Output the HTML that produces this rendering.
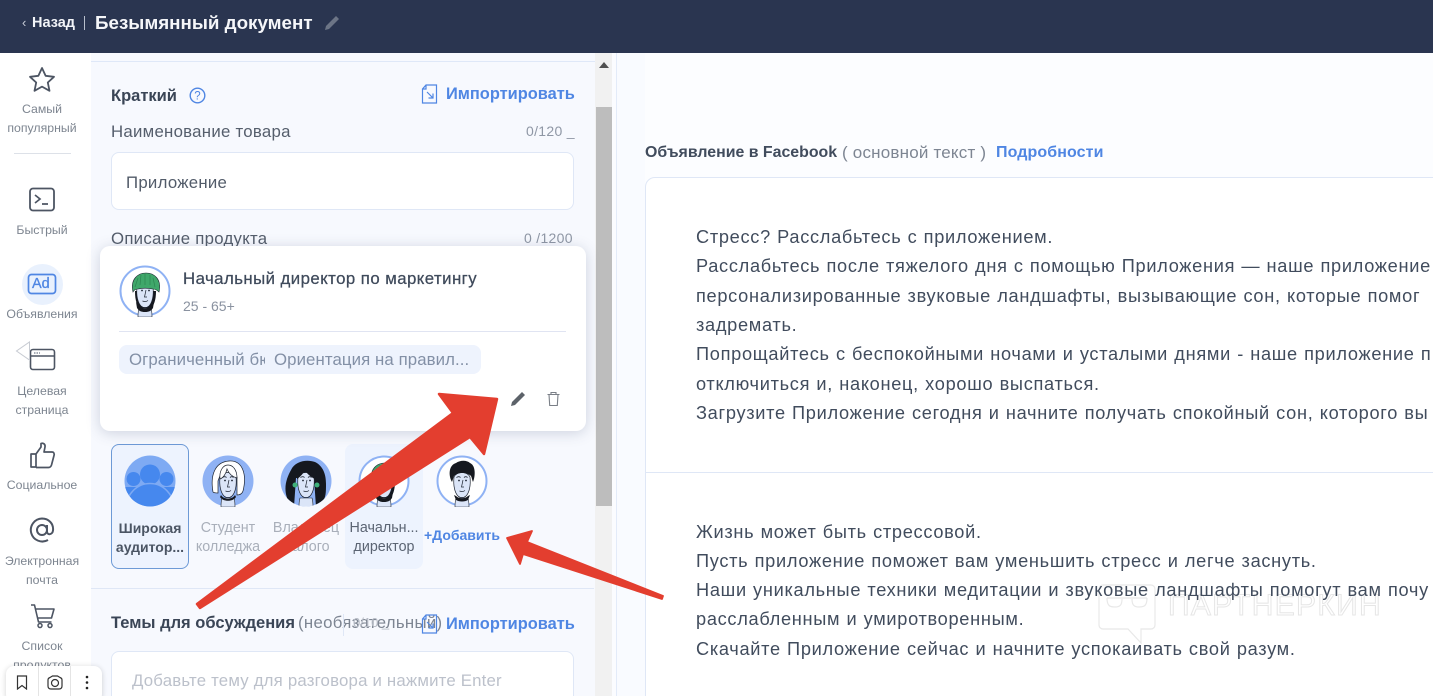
<!DOCTYPE html>
<html lang="ru"><head><meta charset="utf-8"><title>Безымянный документ</title>
<style>
*{box-sizing:border-box}
html,body{margin:0;padding:0;width:1433px;height:696px;overflow:hidden}
body{font-family:"Liberation Sans",sans-serif;color:#3d4859}
#w{position:absolute;left:0;top:0;width:1433px;height:696px;overflow:hidden;background:#fcfdff}
.a{position:absolute}
.t{position:absolute;white-space:nowrap}
.side{position:absolute;left:0;width:84px;text-align:center;font-size:12.3px;line-height:19px;color:#7d8590}
.b{font-weight:bold}
.blue{color:#4f86e3}
.lbl{font-size:16.8px;color:#555e6c;letter-spacing:.27px}
.cnt{font-size:14px;color:#8f97a5;letter-spacing:.3px}
.r{font-size:18.2px;color:#414c5d;left:696px;letter-spacing:.7px;word-spacing:.5px}
.imp{font-size:16.4px}
.nm{position:absolute;width:78px;text-align:center;font-size:14.3px;line-height:19px;color:#a9afba}
</style></head><body><div id="w">

<div class="a" style="left:0;top:0;width:1433px;height:53px;background:#2a3550"></div>
<div class="t" style="left:22px;top:15px;font-size:13px;color:#c9ced8">‹</div>
<div class="t b" style="left:32px;top:15px;font-size:14.5px;color:#f2f4f8">Назад</div>
<div class="a" style="left:84px;top:16px;width:1px;height:14px;background:#b8bfcc"></div>
<div class="t b" style="left:95px;top:12px;font-size:18.8px;color:#f5f6f9">Безымянный документ</div>
<svg class="a" style="left:324px;top:14px" width="17" height="17" viewBox="0 0 17 17"><path d="M1 16l1-4L12 2l3 3L5 15z" fill="#6c7586"/></svg>

<!-- sidebar -->
<div class="a" style="left:0;top:53px;width:91px;height:643px;background:#fff"></div>
<svg class="a" style="left:28px;top:66px" width="28" height="27" viewBox="0 0 28 27"><path d="M14 2l3.6 7.8 8.400 1-6.200 5.700 1.700 8.300L14 20.600 6.500 24.800l1.700-8.300L2 10.800l8.400-1z" fill="none" stroke="#4d5563" stroke-width="1.800" stroke-linejoin="round"/></svg>
<div class="side" style="top:100px">Самый<br>популярный</div>
<div class="a" style="left:14px;top:153px;width:57px;height:1px;background:#dde1e8"></div>
<svg class="a" style="left:28px;top:187px" width="28" height="26" viewBox="0 0 28 26"><rect x="2" y="1.500" width="24" height="22" rx="3" fill="none" stroke="#4d5563" stroke-width="1.800"/><path d="M7 8l5 4-5 4M14 17h6" fill="none" stroke="#4d5563" stroke-width="1.700"/></svg>
<div class="side" style="top:221px">Быстрый</div>
<div class="a" style="left:22px;top:264px;width:41px;height:41px;border-radius:50%;background:#e9f1fd"></div>
<svg class="a" style="left:27px;top:273px" width="31" height="23" viewBox="0 0 31 23"><rect x="1.500" y="1.500" width="27" height="19" rx="3" fill="none" stroke="#4f86e3" stroke-width="1.700"/></svg>
<div class="t" style="left:32px;top:276px;font-size:14.500px;color:#4f86e3;-webkit-text-stroke:.3px #4f86e3">Ad</div>
<div class="side" style="top:305px">Объявления</div>
<svg class="a" style="left:29px;top:348px" width="27" height="23" viewBox="0 0 27 23"><rect x="1.500" y="1.500" width="24" height="20" rx="2.500" fill="none" stroke="#4d5563" stroke-width="1.600"/><path d="M2 8h23" stroke="#4d5563" stroke-width="1.500"/><path d="M5 5h6" stroke="#8a919d" stroke-width="1.500" stroke-dasharray="1.500 1"/></svg>
<svg class="a" style="left:15px;top:341px" width="16" height="20" viewBox="0 0 16 20"><path d="M14.500 1v18L1.500 10z" fill="#fff" stroke="#c7cbd2" stroke-width="1"/></svg>
<div class="side" style="top:382px">Целевая<br>страница</div>
<svg class="a" style="left:29px;top:441px" width="27" height="28" viewBox="0 0 27 28"><path d="M2 13h5v13H2zM7 13l5-7V2.500c2.500-1 4.500 1 4 3.500l-1 5h8c2 0 2.500 2 2 3.500l-2.500 9.500c-.5 1.500-1.500 2.500-3 2.500H7" fill="none" stroke="#4d5563" stroke-width="1.700" stroke-linejoin="round"/></svg>
<div class="side" style="top:476px">Социальное</div>
<svg class="a" style="left:29px;top:517px" width="26" height="26" viewBox="0 0 26 26"><circle cx="13" cy="13" r="5" fill="none" stroke="#4d5563" stroke-width="2"/><path d="M18 8v6.500c0 4 5.500 3.500 6-1C24.800 6.500 19.500 1.500 13 1.500A11.500 11.500 0 1 0 19 23" fill="none" stroke="#4d5563" stroke-width="2"/></svg>
<div class="side" style="top:552px">Электронная<br>почта</div>
<svg class="a" style="left:29px;top:603px" width="27" height="26" viewBox="0 0 27 26"><path d="M2 2h3.500l4 17h13M6.500 6H25l-2.500 9H8.500" fill="none" stroke="#4d5563" stroke-width="1.600" stroke-linejoin="round"/><circle cx="11" cy="22.500" r="2" fill="none" stroke="#4d5563" stroke-width="1.500"/><circle cx="21" cy="22.500" r="2" fill="none" stroke="#4d5563" stroke-width="1.500"/></svg>
<div class="side" style="top:637px">Список<br>продуктов</div>

<!-- left panel -->
<div class="a" style="left:91px;top:53px;width:504px;height:643px;background:#f7f9fe"></div>
<div class="a" style="left:91px;top:61px;width:504px;height:1px;background:#dfe8f8"></div>
<div class="a" style="left:595px;top:53px;width:17px;height:643px;background:#f1f1f1"></div>
<div class="a" style="left:596px;top:107px;width:16px;height:399px;background:#bdbdbd"></div>
<svg class="a" style="left:599px;top:62px" width="10" height="6"><path d="M0 6L5 0l5 6z" fill="#505050"/></svg>
<div class="a" style="left:612px;top:53px;width:4px;height:643px;background:#fbfcff"></div>
<div class="a" style="left:616px;top:53px;width:1px;height:643px;background:#e3ebf9"></div>
<div class="a" style="left:617px;top:53px;width:28px;height:643px;background:#f9fbff"></div>

<div class="t b" style="left:111px;top:87px;font-size:16.5px;color:#3a4556">Краткий</div>
<svg class="a" style="left:189px;top:87px" width="17" height="17" viewBox="0 0 17 17"><circle cx="8.500" cy="8.500" r="7.300" fill="none" stroke="#4f86e3" stroke-width="1.400"/><text x="8.500" y="12.700" font-size="11.500" text-anchor="middle" fill="#4f86e3" font-family="Liberation Sans">?</text></svg>
<svg class="a" style="left:421px;top:84px" width="17" height="20" viewBox="0 0 17 20"><path d="M5 1h10.500v18h-14V5z M5 1v4H1.500M6 8l6 6M12 9.500V14H7.500" fill="none" stroke="#4f86e3" stroke-width="1.200"/></svg>
<div class="t b blue imp" style="left:446px;top:85px">Импортировать</div>
<div class="t lbl" style="left:111px;top:122px">Наименование товара</div>
<div class="t cnt" style="left:526px;top:123px">0/120 _</div>
<div class="a" style="left:111px;top:152px;width:463px;height:58px;background:#fff;border:1px solid #dfe7f6;border-radius:8px"></div>
<div class="t lbl" style="left:126px;top:173px;color:#525b69">Приложение</div>
<div class="t lbl" style="left:111px;top:229px">Описание продукта</div>
<div class="t cnt" style="left:524px;top:230px">0 /1200</div>

<!-- shared avatar parts -->
<svg width="0" height="0" style="position:absolute"><defs>
<clipPath id="cc"><circle cx="26" cy="26" r="25.500"/></clipPath>
<symbol id="face" viewBox="0 0 52 52"><path d="M19 52c0-3 0-6 1-9h12c1 3 1 6 1 9z" fill="#dbe5f8" stroke="#1d2430" stroke-width=".6"/><path d="M18 22c-1 9 1 16 4 19 2 2 6 2 8 0 3-3 5-10 4-19-3-6-13-6-16 0z" fill="#dbe5f8" stroke="#1d2430" stroke-width=".7"/><path d="M20.500 22.500c1.500-1 3-1 4 0M28 22.500c1-1 2.500-1 3.500 0" fill="none" stroke="#1d2430" stroke-width=".9"/><circle cx="23" cy="25.500" r=".9" fill="#1d2430"/><circle cx="30" cy="25.500" r=".9" fill="#1d2430"/><path d="M27 25l-1.500 7h2.500M23.500 36c2 .8 4 .6 5.500-.5" fill="none" stroke="#1d2430" stroke-width=".7"/></symbol>
<symbol id="chief" viewBox="0 0 52 52"><circle cx="26" cy="26" r="24.500" fill="#fff" stroke="#8fb2f4" stroke-width="2"/><path d="M16 26c0 10 2 15 6 18 3 2 6 2 9 0 4-3 6-9 6-18z" fill="#15181f"/><use href="#face" width="52" height="52"/><path d="M20 41c3 3 9 3 12 0l3-4-1 6c-2 3-4 4-8 4s-6-1-8-4l-1-6z" fill="#15181f"/><path d="M14 27C11 14 19 8 27 8s16 6 13 19c-2-2-4-3-6-3-5-1-11-1-15 0-2 0-4 1-5 3z" fill="#3fa76a" stroke="#1d2430" stroke-width=".6"/><path d="M16 22l3-9M21 20l1-10M26 20V9M31 20l0-10M36 22l-2-9" stroke="#2c8552" stroke-width=".7"/></symbol>
</defs></svg>

<!-- audience row -->
<div class="a" style="left:111px;top:444px;width:78px;height:125px;background:#edf3fe;border:1px solid #6d9ad6;border-radius:8px"></div>
<div class="a" style="left:345px;top:444px;width:78px;height:125px;background:#edf3fe;border-radius:8px"></div>
<svg class="a" style="left:124px;top:455px" width="52" height="52" viewBox="0 0 52 52"><circle cx="26" cy="26" r="25.500" fill="#7eaaf3"/><g clip-path="url(#cc)" fill="#4688ee"><circle cx="9.500" cy="24" r="7"/><circle cx="42.500" cy="24" r="7"/><path d="M0 32h14l-4 20H0zM52 32H38l4 20h10z"/><circle cx="26" cy="19.500" r="10"/><circle cx="26" cy="52" r="23.500" stroke="#7eaaf3" stroke-width="1.500"/></g></svg>
<!-- student -->
<svg class="a" style="left:202px;top:455px" width="52" height="52" viewBox="0 0 52 52"><circle cx="26" cy="26" r="25.500" fill="#8fb2f4"/><path d="M11 37C8 20 13 7 27 6s18 14 14 30c-1 3-3 4-6 4V22L19 18l-3 8v12c-2 0-4 0-5-1z" fill="#fff" stroke="#1d2430" stroke-width=".7"/><use href="#face" width="52" height="52"/><path d="M19 40c3 5 11 5 14 0l1 2c-3 5-13 5-16 0z" fill="#15181f"/><path d="M18 24c3-1 6-5 7-10 2 5 6 8 10 9 0-8-4-13-9-13s-9 6-8 14z" fill="#fff" stroke="#1d2430" stroke-width=".7"/></svg>
<!-- owner -->
<svg class="a" style="left:280px;top:455px" width="52" height="52" viewBox="0 0 52 52"><circle cx="26" cy="26" r="25.500" fill="#8fb2f4"/><g clip-path="url(#cc)"><path d="M10 49C2 36 6 24 11 15 15 6 27 4 35 7c8 4 11 12 11 22 0 8 0 14-4 18l-6 5-2-29-18 0-2 29z" fill="#15181f"/><use href="#face" width="52" height="52"/><path d="M17 24c3-2 6-5 8-9 2 4 6 7 10 9l2-8-10-6-10 5z" fill="#15181f"/><circle cx="15" cy="30" r="2.500" fill="#3fb07a"/><circle cx="37" cy="30" r="2.500" fill="#3fb07a"/></g></svg>
<!-- chief -->
<svg class="a" style="left:358px;top:455px" width="52" height="52" viewBox="0 0 52 52"><use href="#chief" width="52" height="52"/></svg>
<!-- add -->
<svg class="a" style="left:436px;top:455px" width="52" height="52" viewBox="0 0 52 52"><circle cx="26" cy="26" r="24.500" fill="#fff" stroke="#8fb2f4" stroke-width="2"/><use href="#face" width="52" height="52"/><path d="M20 41c3 3 9 3 12 0l2-1-2 5c-3 2-9 2-12 0l-2-5z" fill="#15181f"/><path d="M16 27C12 20 13 10 20 8c4-3 11-3 14 0 5 2 6 11 3 19-1-2-1-4-2-6-2-2-5-3-9-3-3 0-6 1-8 3z" fill="#15181f"/></svg>

<div class="nm b" style="left:111px;top:519px;color:#4b5564;font-size:14px">Широкая<br>аудитор...</div>
<div class="nm" style="left:189px;top:519px">Студент<br>колледжа</div>
<div class="nm" style="left:267px;top:519px">Владелец<br>малого</div>
<div class="nm" style="left:345px;top:519px;color:#5b6473">Начальн...<br>директор</div>
<div class="t b blue" style="left:424px;top:527px;font-size:14px">+Добавить</div>

<div class="a" style="left:91px;top:588px;width:503px;height:1px;background:#dfe7f6"></div>
<div class="t b" style="left:111px;top:614px;font-size:16.5px;color:#3a4556">Темы для обсуждения</div>
<div class="t" style="left:298px;top:613px;font-size:16.8px;letter-spacing:.3px;color:#7d8592">(необязательный)</div>
<div class="t" style="left:353px;top:615px;font-size:13px;color:#b5bac4">0/10 _</div>
<div class="a" style="left:343px;top:614px;width:1px;height:22px;background:#dfe7f6"></div>
<svg class="a" style="left:421px;top:614px" width="17" height="20" viewBox="0 0 17 20"><path d="M5 1h10.500v18h-14V5z M5 1v4H1.500M6 8l6 6M12 9.500V14H7.500" fill="none" stroke="#4f86e3" stroke-width="1.200"/></svg>
<div class="t b blue imp" style="left:446px;top:615px">Импортировать</div>
<div class="a" style="left:111px;top:651px;width:463px;height:60px;background:#fff;border:1px solid #dfe7f6;border-radius:8px"></div>
<div class="t" style="left:132px;top:671px;font-size:16.8px;letter-spacing:.2px;color:#bcc1cb">Добавьте тему для разговора и нажмите Enter</div>

<!-- popup -->
<div class="a" style="left:100px;top:246px;width:486px;height:185px;background:#fff;border-radius:10px;box-shadow:0 2px 14px rgba(60,75,110,.22)"></div>
<svg class="a" style="left:119px;top:265px" width="52" height="52" viewBox="0 0 52 52"><use href="#chief" width="52" height="52"/></svg>
<div class="t" style="left:183px;top:269px;font-size:16.8px;letter-spacing:.45px;color:#3f4a5b;-webkit-text-stroke:.25px #3f4a5b">Начальный директор по маркетингу</div>
<div class="t" style="left:183px;top:298px;font-size:14px;color:#8a92a0">25 - 65+</div>
<div class="a" style="left:119px;top:331px;width:447px;height:1px;background:#e0e4f2"></div>
<div class="a" style="left:119px;top:345px;width:362px;height:29px;background:#eef3fd;border-radius:8px"></div>
<div class="a" style="left:129px;top:350px;width:136px;height:20px;overflow:hidden;white-space:nowrap;font-size:16.8px;letter-spacing:.1px;color:#8390a6">Ограниченный бюджет</div>
<div class="t" style="left:274px;top:350px;font-size:16.8px;letter-spacing:.1px;color:#8390a6">Ориентация на правил...</div>
<svg class="a" style="left:510px;top:390px" width="17" height="17" viewBox="0 0 17 17"><path d="M1 16l1-4L12 2l3 3L5 15z" fill="#5c6269"/></svg>
<svg class="a" style="left:546px;top:391px" width="15" height="16" viewBox="0 0 15 16"><path d="M1.500 3.500h12M5 3.500V1.500h5v2M3 3.500l.7 11h7.600l.7-11" fill="none" stroke="#7a7f87" stroke-width="1.100"/></svg>

<!-- right -->
<div class="t b" style="left:645px;top:144px;font-size:15.9px;color:#414c5d">Объявление в Facebook</div>
<div class="t" style="left:842px;top:143px;font-size:17px;letter-spacing:.2px;color:#7d8592">( основной текст )</div>
<div class="t b blue" style="left:996px;top:144px;font-size:16px;letter-spacing:.1px">Подробности</div>
<div class="a" style="left:645px;top:177px;width:800px;height:530px;background:#fff;border:1px solid #dfe7f6;border-radius:10px"></div>
<div class="a" style="left:646px;top:472px;width:787px;height:1px;background:#dfe7f6"></div>

<!-- watermark -->
<svg class="a" style="left:1097px;top:583px" width="60" height="62" viewBox="0 0 60 62"><path d="M6 2h48a4 4 0 0 1 4 4v36a4 4 0 0 1-4 4H44v14L31 46H6a4 4 0 0 1-4-4V6a4 4 0 0 1 4-4z" fill="none" stroke="#e8e8e8" stroke-width="1.200"/><path d="M10 15h40M10 15c0 8 3 9 8 9s7-2 7-8M35 16c0 6 2 8 7 8s8-1 8-9" fill="none" stroke="#e8e8e8" stroke-width="1.200"/></svg>
<div class="t" style="left:1168px;top:589px;font-size:30px;letter-spacing:1.3px;color:transparent;-webkit-text-stroke:1px #e6e6e6">ПАРТНЕРКИН</div>

<div class="t r" style="top:227px">Стресс? Расслабьтесь с приложением.</div>
<div class="t r" style="top:256px">Расслабьтесь после тяжелого дня с помощью Приложения — наше приложение</div>
<div class="t r" style="top:286px">персонализированные звуковые ландшафты, вызывающие сон, которые помог</div>
<div class="t r" style="top:315px">задремать.</div>
<div class="t r" style="top:344px">Попрощайтесь с беспокойными ночами и усталыми днями - наше приложение п</div>
<div class="t r" style="top:374px">отключиться и, наконец, хорошо выспаться.</div>
<div class="t r" style="top:403px">Загрузите Приложение сегодня и начните получать спокойный сон, которого вы</div>
<div class="t r" style="top:522px">Жизнь может быть стрессовой.</div>
<div class="t r" style="top:551px">Пусть приложение поможет вам уменьшить стресс и легче заснуть.</div>
<div class="t r" style="top:580px">Наши уникальные техники медитации и звуковые ландшафты помогут вам почу</div>
<div class="t r" style="top:609px">расслабленным и умиротворенным.</div>
<div class="t r" style="top:639px">Скачайте Приложение сейчас и начните успокаивать свой разум.</div>

<!-- arrows -->
<svg class="a" style="left:0;top:0" width="1433" height="696" viewBox="0 0 1433 696"><path d="M497 399L484 454 470 437 200 608 197 604 453 413 439 394z" fill="#e33e2f" stroke="#e33e2f" stroke-width="2.500" stroke-linejoin="round"/><path d="M507 538L532 531 527 542 663 596 662 599 523 554 520 564z" fill="#e33e2f" stroke="#e33e2f" stroke-width="1.800" stroke-linejoin="round"/></svg>

<!-- toolbar -->
<div class="a" style="left:6px;top:666px;width:96px;height:36px;background:#fff;border-radius:8px;box-shadow:0 1px 6px rgba(0,0,0,.18)"></div>
<div class="a" style="left:38px;top:666px;width:1px;height:30px;background:#e4e4e4"></div>
<div class="a" style="left:70px;top:666px;width:1px;height:30px;background:#e4e4e4"></div>
<svg class="a" style="left:16px;top:675px" width="12" height="15" viewBox="0 0 12 15"><path d="M1.500 1h9v13L6 10.500 1.500 14z" fill="none" stroke="#333" stroke-width="1.200"/></svg>
<svg class="a" style="left:46px;top:675px" width="18" height="15" viewBox="0 0 18 15"><path d="M2 5c0-1 .5-2 2-2.500L6.500 1h5L14 2.500C15.500 3 16 4 16 5v6c0 2-1 3-3 3H5c-2 0-3-1-3-3z" fill="none" stroke="#333" stroke-width="1.200"/><circle cx="9" cy="8" r="3.500" fill="none" stroke="#333" stroke-width="1.200"/></svg>
<svg class="a" style="left:85px;top:675px" width="4" height="15" viewBox="0 0 4 15"><circle cx="2" cy="2" r="1.300" fill="#222"/><circle cx="2" cy="7.500" r="1.300" fill="#222"/><circle cx="2" cy="13" r="1.300" fill="#222"/></svg>
</div></body></html>
